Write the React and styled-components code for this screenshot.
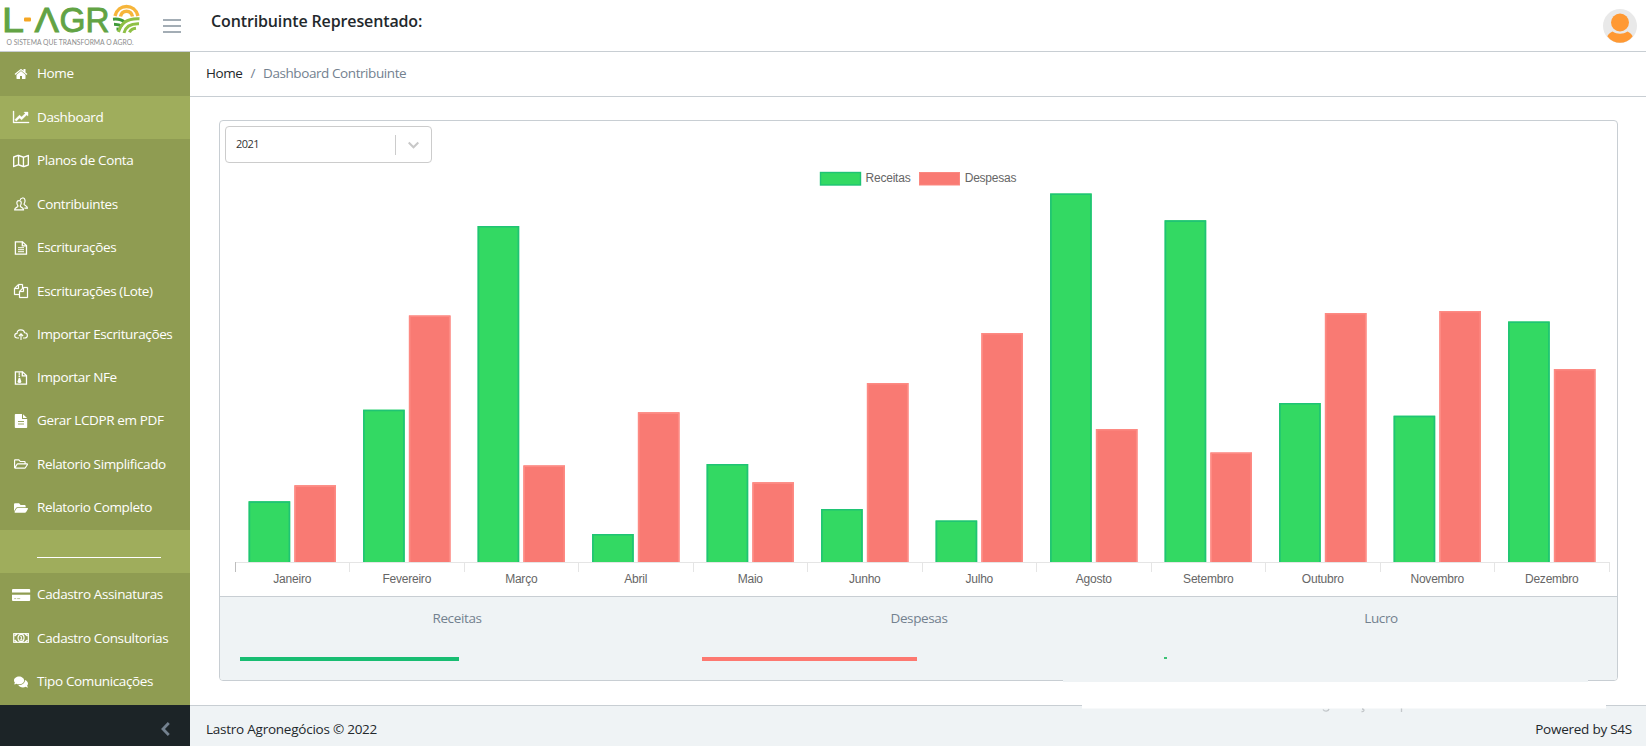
import { useState } from 'react'
import styled, { createGlobalStyle, css } from 'styled-components'
import { FaRegMap, FaRegFolderOpen, FaFolderOpen, FaComments } from 'react-icons/fa'

const GlobalStyle = createGlobalStyle`
    *, *::before, *::after {
        box-sizing: border-box;
    }
    body {
        margin: 0;
        background: #fff;
        color: #23282c;
        font-family: "Open Sans", "Noto Sans", sans-serif;
        font-size: 13.5px;
        letter-spacing: -0.37px;
        line-height: 20px;
        overflow: hidden;
    }
`

const Page = styled.div`
    display: flex;
    flex-direction: column;
    width: 100%;
    height: 746px;
`

const Header = styled.header`
    display: flex;
    align-items: center;
    flex: 0 0 52px;
    padding-right: 9px;
    border-bottom: 1px solid #c8ced3;
`

const Brand = styled.a`
    display: flex;
    width: 142px;
    height: 51px;
`

const Toggler = styled.button`
    display: flex;
    flex-direction: column;
    gap: 4px;
    width: 18px;
    margin-left: 21px;
    padding: 0;
    border: none;
    background: none;
    cursor: pointer;

    span {
        height: 2px;
        background: #a3adb5;
    }
`

const HeaderTitle = styled.h1`
    flex: 1;
    margin: -10px 0 0 30px;
    font-size: 16px;
    font-weight: 600;
    letter-spacing: -0.13px;
`

const Avatar = styled.svg`
    width: 34px;
    height: 34px;
`

const Body = styled.div`
    display: flex;
    flex: 1;
    min-height: 0;
`

const Sidebar = styled.nav`
    display: flex;
    flex-direction: column;
    flex: 0 0 190px;
    background: #8f9c52;
`

const NavList = styled.div`
    flex: 1;
    min-height: 0;
    overflow: hidden;
`

const NavItem = styled.a`
    display: flex;
    align-items: center;
    height: ${({ $short }) => ($short ? '42.6px' : '43.5px')};
    padding-left: 11px;
    color: #fff;
    cursor: pointer;
    ${({ $active }) => $active && css`
        background: #9fad5c;
    `}
`

const NavIcon = styled.span`
    display: flex;
    justify-content: center;
    width: 20px;
    margin-right: 6px;
    font-size: ${({ $size }) => $size || 14}px;
`

const NavText = styled.span`
    padding-bottom: 1px;
    white-space: nowrap;
`

const NavLine = styled.span`
    width: 124px;
    height: 1px;
    margin-top: 12px;
    background: #fff;
`

const Minimizer = styled.button`
    display: flex;
    align-items: center;
    justify-content: flex-end;
    flex: 0 0 41px;
    padding: 7px 20px 0 0;
    border: none;
    background: #1c2427;
    color: #73818f;
    cursor: pointer;
`

const Content = styled.div`
    display: flex;
    flex-direction: column;
    flex: 1;
`

const Breadcrumb = styled.div`
    display: flex;
    align-items: center;
    gap: 8px;
    flex: 0 0 45px;
    padding: 0 0 2px 16px;
    border-bottom: 1px solid #c8ced3;
    color: #73818f;
    letter-spacing: -0.42px;

    a {
        color: #23282c;
    }
`

const Main = styled.main`
    flex: 1;
    padding: 23px 28px 0 29px;
`

const Card = styled.section`
    display: flex;
    flex-direction: column;
    height: 561px;
    border: 1px solid #c8ced3;
    border-radius: 4px;
    background: #fff;
`

const CardBody = styled.div`
    flex: 1;
    padding: 5px 5px 0;
`

const Select = styled.div`
    display: flex;
    align-items: center;
    width: 207px;
    height: 37px;
    padding: 0 12px 0 10px;
    border: 1px solid #ccc;
    border-radius: 4px;
`

const SelectValue = styled.span`
    flex: 1;
    margin-top: -2px;
    font-size: 11px;
    letter-spacing: -0.5px;
    color: #333;
`

const SelectSeparator = styled.span`
    width: 1px;
    height: 20px;
    margin-right: 12px;
    background: #ccc;
`

const Chart = styled.svg`
    display: block;
    width: 1386px;
    height: 432px;
    margin-left: 1px;
    font-family: "Liberation Sans", Arial, sans-serif;
    font-size: 12px;
    letter-spacing: -0.22px;

    text {
        fill: #666;
    }
`

const CardFooter = styled.div`
    display: grid;
    grid-template-columns: repeat(3, 1fr);
    height: 84px;
    padding: 11px 5px 0 6px;
    border-top: 1px solid #c8ced3;
    border-radius: 0 0 3px 3px;
    background: #eff3f5;
`

const Total = styled.div`
    display: flex;
    flex-direction: column;
    gap: 29px;
    padding: 0 14px;
    color: #73818f;
    letter-spacing: -0.37px;
    text-align: center;
`

const Progress = styled.div`
    height: ${({ $thin }) => ($thin ? 2 : 4)}px;
    background: ${({ $color }) => $color};
`

const Footer = styled.footer`
    display: flex;
    justify-content: space-between;
    position: relative;
    flex: 0 0 41px;
    padding: 13px 14px 0 16px;
    border-top: 1px solid #c8ced3;
    background: #eff3f5;
    letter-spacing: -0.24px;
`

// system watermark, only a sliver of it stays visible above the footer
const Watermark = styled.svg`
    position: absolute;
    top: -3px;
    right: 40px;
    width: 524px;
    height: 10px;
`

const CardMask = styled.div`
    position: absolute;
    top: -26px;
    right: 58px;
    width: 525px;
    height: 2px;
    background: #eff3f5;
`

const GlyphSvg = styled.svg`
    width: ${({ $wide }) => $wide || 1}em;
    height: 1em;
    overflow: visible;
`

const HomeIcon = () => (
    <GlyphSvg viewBox="0 0 1792 1792" fill="currentColor">
        <path d="M1472 992v480q0 26-19 45t-45 19h-384v-384h-256v384h-384q-26 0-45-19t-19-45v-480q0-1 .5-3t.5-3l575-474 575 474q1 2 1 6zm223-69l-62 74q-8 9-21 11h-3q-13 0-21-7l-692-577-692 577q-12 8-24 7-13-2-21-11l-62-74q-8-10-7-23.5t11-21.5l719-599q32-26 76-26t76 26l244 204v-195q0-14 9-23t23-9h192q14 0 23 9t9 23v408l219 182q10 8 11 21.5t-7 23.5z" />
    </GlyphSvg>
)

const LineChartIcon = () => (
    <GlyphSvg $wide={1.15} viewBox="0 0 2048 1792" fill="currentColor" stroke="currentColor" strokeWidth="40">
        <path d="M2048 1536v128h-2048v-1536h128v1408h1920zm-128-1248v435q0 21-19.5 29.5t-35.5-7.5l-121-121-633 633q-10 10-23 10t-23-10l-233-233-416 416-192-192 585-585q10-10 23-10t23 10l233 233 464-464-121-121q-16-16-7.5-35.5t29.5-19.5h435q14 0 23 9t9 23z" />
    </GlyphSvg>
)

const CopyIcon = () => (
    <GlyphSvg viewBox="0 0 1792 1792" fill="currentColor" stroke="currentColor" strokeWidth="30">
        <path d="M1696 384q40 0 68 28t28 68v1216q0 40-28 68t-68 28h-960q-40 0-68-28t-28-68v-288h-544q-40 0-68-28t-28-68v-672q0-40 20-88t48-76l408-408q28-28 76-48t88-20h416q40 0 68 28t28 68v328q68-40 128-40h416zm-544 213l-299 299h299v-299zm-640-384l-299 299h299v-299zm196 647l316-316v-416h-384v416q0 40-28 68t-68 28h-416v640h512v-256q0-40 20-88t48-76zm956 804v-1152h-384v416q0 40-28 68t-68 28h-416v640h896z" />
    </GlyphSvg>
)

const PeopleIcon = () => (
    <GlyphSvg viewBox="0 0 14 14" fill="none" stroke="currentColor" strokeWidth="1.200">
        <path d="M.7 12.800c0-2.600 3.300-2.200 3.300-3.800C3 8 2.700 6.500 2.900 5.200c.3-2 4-2 4.300 0C7.400 6.500 7 8 6.200 9c0 1.600 3.300 1.200 3.300 3.800z" />
        <path d="M6.200 3C6.500.4 10.700.2 11 3c.2 1.500-.2 3-1 4 0 1.700 3.400 1.400 3.400 4.100h-3" />
    </GlyphSvg>
)

const FileOutline = ({ children }) => (
    <GlyphSvg viewBox="0 0 14 14" fill="none" stroke="currentColor" strokeWidth="1.300">
        <path d="M1.400.8H8.500L12.500 4.600V13.200H1.400z" />
        <path d="M8.300.8V4.800H12.500" />
        {children}
    </GlyphSvg>
)

const FileTextIcon = () => (
    <FileOutline>
        <path d="M4 6.700H10M4 8.700H10M4 10.700H10" strokeWidth="1" />
    </FileOutline>
)

const FileZipIcon = () => (
    <FileOutline>
        <path d="M5.300 1.500V7" strokeWidth="1.500" strokeDasharray="1.200 .6" />
        <path d="M4.600 7H6.200L7.400 10.800Q7.400 12 5.500 12T3.500 10.800z" fill="currentColor" stroke="none" />
    </FileOutline>
)

const FileSolidIcon = () => (
    <GlyphSvg viewBox="0 0 14 14" fill="currentColor">
        <path d="M1.600 0H8V5H13.200V13.200q0 .8-.8.8H1.600q-.8 0-.8-.8V.8Q.8 0 1.600 0z" />
        <path d="M9 .2L13 4.100H9z" />
        <path d="M4 7.500H10M4 10H10" stroke="#8f9c52" strokeWidth=".9" />
    </GlyphSvg>
)

const CloudIcon = () => (
    <GlyphSvg viewBox="0 0 14 14" fill="none" stroke="currentColor" strokeWidth="1.100">
        <path d="M5 10H3.300C-.2 9.800 0 5.600 3 5.400 3.200 1 9.700.7 10.600 4.800c3.700 0 3.700 5.200 0 5.200H9" />
        <path d="M7 12V6M4.900 8L7 5.900 9.100 8" />
    </GlyphSvg>
)

const CardIcon = () => (
    <GlyphSvg $wide={1.3} viewBox="0 0 18.200 14" fill="currentColor">
        <path d="M1 1H17.200q1 0 1 1V4.400H0V2Q0 1 1 1zM0 6.800H18.200V12q0 1-1 1H1q-1 0-1-1z" />
        <path d="M2.200 10.600H4.200M5.200 10.600H8.200" stroke="#8f9c52" strokeWidth=".6" />
    </GlyphSvg>
)

const MoneyIcon = () => (
    <GlyphSvg $wide={1.15} viewBox="0 0 16 14" fill="none" stroke="currentColor">
        <rect x=".7" y="2.700" width="14.600" height="8.600" strokeWidth="1.200" />
        <path d="M1.500 5L3.800 3M14.500 5L12.200 3M1.500 9L3.800 11M14.500 9L12.200 11" strokeWidth="1.500" />
        <ellipse cx="8" cy="7" rx="3" ry="3.600" strokeWidth="1.200" />
        <path d="M7.200 5.300H8.300V8.800M6.800 8.900H9.500" />
    </GlyphSvg>
)

const Logo = () => (
    <svg width="142" height="51" viewBox="0 0 142 51">
        <g fill="#62a344" stroke="#62a344" strokeWidth=".9" fontFamily="Liberation Sans, Arial, sans-serif" fontSize="35" letterSpacing="0">
            <text x="2" y="32.300" textLength="22" lengthAdjust="spacingAndGlyphs">L</text>
            <text x="34.500" y="32.300" textLength="24.500" lengthAdjust="spacingAndGlyphs">Λ</text>
            <text x="59.500" y="32.300" textLength="26" lengthAdjust="spacingAndGlyphs">G</text>
            <text x="85.500" y="32.300" textLength="24" lengthAdjust="spacingAndGlyphs">R</text>
        </g>
        <rect x="24" y="17.500" width="7" height="4" rx="1" fill="#f5a623" />
        <g fill="none" strokeWidth="3.400">
            <path d="M115 16C118 3.300 135 3.300 138 16" stroke="#f6b53a" />
            <path d="M120.500 16.500C122 9.500 131 9.500 132.500 16.500" stroke="#f6b53a" />
        </g>
        <g fill="none" strokeWidth="3">
            <path d="M113 19.200c5-.5 9 .5 11.500 3" stroke="#3f9a3a" />
            <path d="M114 24.200c4 0 6 .5 8.500 2.300" stroke="#3f9a3a" />
            <path d="M116.500 29c2 0 3 .3 4 1" stroke="#3f9a3a" />
            <path d="M118.500 32C121 22.500 128 18 139.500 18.700" stroke="#8fc045" />
            <path d="M124 33C125.500 27 131 23.500 139 23.800" stroke="#8fc045" />
            <path d="M129.500 32.300c1-2.300 3-3.600 6.500-4" stroke="#8fc045" />
        </g>
        <text x="6.500" y="45" fontFamily="Lato, sans-serif" fontSize="7" letterSpacing="0" fill="#8d8d8d" textLength="127" lengthAdjust="spacingAndGlyphs">
            O SISTEMA QUE TRANSFORMA O AGRO.
        </text>
    </svg>
)

const menu = [
    { label: 'Home', icon: <HomeIcon /> },
    { label: 'Dashboard', icon: <LineChartIcon /> },
    { label: 'Planos de Conta', icon: <FaRegMap />, size: 16 },
    { label: 'Contribuintes', icon: <PeopleIcon /> },
    { label: 'Escriturações', icon: <FileTextIcon /> },
    { label: 'Escriturações (Lote)', icon: <CopyIcon /> },
    { label: 'Importar Escriturações', icon: <CloudIcon /> },
    { label: 'Importar NFe', icon: <FileZipIcon />, short: true },
    { label: 'Gerar LCDPR em PDF', icon: <FileSolidIcon /> },
    { label: 'Relatorio Simplificado', icon: <FaRegFolderOpen /> },
    { label: 'Relatorio Completo', icon: <FaFolderOpen /> },
    { divider: true },
    { label: 'Cadastro Assinaturas', icon: <CardIcon /> },
    { label: 'Cadastro Consultorias', icon: <MoneyIcon /> },
    { label: 'Tipo Comunicações', icon: <FaComments /> },
]

// bar heights in chart pixels
const months = [
    { name: 'Janeiro', receitas: 60.7, despesas: 76.7 },
    { name: 'Fevereiro', receitas: 152.3, despesas: 246.5 },
    { name: 'Março', receitas: 336, despesas: 96.6 },
    { name: 'Abril', receitas: 28, despesas: 149.7 },
    { name: 'Maio', receitas: 98, despesas: 79.7 },
    { name: 'Junho', receitas: 53, despesas: 179 },
    { name: 'Julho', receitas: 41.5, despesas: 229 },
    { name: 'Agosto', receitas: 368.5, despesas: 133 },
    { name: 'Setembro', receitas: 341.7, despesas: 109.5 },
    { name: 'Outubro', receitas: 159, despesas: 249 },
    { name: 'Novembro', receitas: 146.3, despesas: 251 },
    { name: 'Dezembro', receitas: 240.5, despesas: 193 },
]

const totals = [
    { name: 'Receitas', color: '#18bd72', percent: 50.4 },
    { name: 'Despesas', color: '#fd7870', percent: 49.6 },
    { name: 'Lucro', color: '#3cc274', percent: 0.8, thin: true },
]

const LEFT = 9.5
const STEP = 114.5
const BASE = 399

const Bar = ({ x, height, fill, stroke }) => (
    <>
        <rect x={x} y={BASE - height} width="41.6" height={height} fill={fill} />
        <path
            d={`M${x + 0.8} ${BASE}V${BASE - height + 0.8}H${x + 40.8}V${BASE}`}
            fill="none"
            stroke={stroke}
            strokeWidth="1.600"
        />
    </>
)

const BarChart = () => (
    <Chart viewBox="0 0 1386 432">
        <rect x="594.500" y="9.500" width="40" height="12.500" fill="#33d963" stroke="#1fc474" strokeWidth="1.400" />
        <text x="639.500" y="18.500">Receitas</text>
        <rect x="693.500" y="9.500" width="40" height="12.500" fill="#f97a73" stroke="#fb8880" />
        <text x="738.700" y="18.500">Despesas</text>
        <path d={`M${LEFT} ${BASE + 0.5}H${LEFT + STEP * 12}`} stroke="#e5e5e5" />
        {Array.from({ length: 13 }, (_, i) => {
            const x = Math.round(LEFT + STEP * i) - 0.5
            return <path key={i} d={`M${x} ${BASE}v10`} stroke={i === 0 ? '#bdbdbd' : '#e5e5e5'} />
        })}
        {months.map((m, i) => (
            <g key={m.name}>
                <Bar x={LEFT + STEP * i + 13.1} height={m.receitas} fill="#33d963" stroke="#1fc474" />
                <Bar x={LEFT + STEP * i + 58.9} height={m.despesas} fill="#f97a73" stroke="#fd8a83" />
                <text x={LEFT + STEP * (i + 0.5) - 0.5} y="419.500" textAnchor="middle">{m.name}</text>
            </g>
        ))}
    </Chart>
)

const App = () => {
    const [active, setActive] = useState('Dashboard')

    return (
        <Page>
            <GlobalStyle />
            <Header>
                <Brand><Logo /></Brand>
                <Toggler><span /><span /><span /></Toggler>
                <HeaderTitle>Contribuinte Representado:</HeaderTitle>
                <Avatar viewBox="0 0 34 34">
                    <circle cx="17" cy="17" r="17" fill="#e9e9e9" />
                    <circle cx="17" cy="13.500" r="9" fill="#ff9933" />
                    <path d="M4.300 27.200C5.500 25 7 23.500 9.500 22.400c4.500 3 10.500 3 15 0 2.500 1.100 4 2.600 5.200 4.800C23 36 11 36 4.300 27.200z" fill="#ff9933" />
                </Avatar>
            </Header>
            <Body>
                <Sidebar>
                    <NavList>
                        {menu.map((item, i) => item.divider ? (
                            <NavItem key={i} $active>
                                <NavIcon />
                                <NavLine />
                            </NavItem>
                        ) : (
                            <NavItem
                                key={i}
                                $active={item.label === active}
                                $short={item.short}
                                onClick={() => setActive(item.label)}
                            >
                                <NavIcon $size={item.size}>{item.icon}</NavIcon>
                                <NavText>{item.label}</NavText>
                            </NavItem>
                        ))}
                    </NavList>
                    <Minimizer>
                        <svg width="9" height="14" viewBox="0 0 9 14" fill="none" stroke="currentColor" strokeWidth="2.800">
                            <path d="M7.800 1L2 7 7.800 13" />
                        </svg>
                    </Minimizer>
                </Sidebar>
                <Content>
                    <Breadcrumb>
                        <a>Home</a>
                        <span>/</span>
                        <span>Dashboard Contribuinte</span>
                    </Breadcrumb>
                    <Main>
                        <Card>
                            <CardBody>
                                <Select>
                                    <SelectValue>2021</SelectValue>
                                    <SelectSeparator />
                                    <svg width="11" height="8" viewBox="0 0 11 8" fill="none" stroke="#c8c8c8" strokeWidth="2">
                                        <path d="M.7 1.500L5.500 6.300 10.300 1.500" />
                                    </svg>
                                </Select>
                                <BarChart />
                            </CardBody>
                            <CardFooter>
                                {totals.map((t) => (
                                    <Total key={t.name}>
                                        <span>{t.name}</span>
                                        <Progress $color={t.color} $thin={t.thin} style={{ width: `${t.percent}%` }} />
                                    </Total>
                                ))}
                            </CardFooter>
                        </Card>
                    </Main>
                    <Footer>
                        <CardMask />
                        <Watermark viewBox="0 0 524 10">
                            <path d="M0 0h524v5.500H0z" fill="#fff" />
                            <path d="M241 6.500c1.500 2.300 5.500 2 6-.5M280 6c3 0 2.500 3-.5 2.500M319.500 5.500v3.500" fill="none" stroke="#c3c7ca" strokeWidth="1.300" />
                        </Watermark>
                        <span>Lastro Agronegócios © 2022</span>
                        <span>Powered by S4S</span>
                    </Footer>
                </Content>
            </Body>
        </Page>
    )
}

export default App
